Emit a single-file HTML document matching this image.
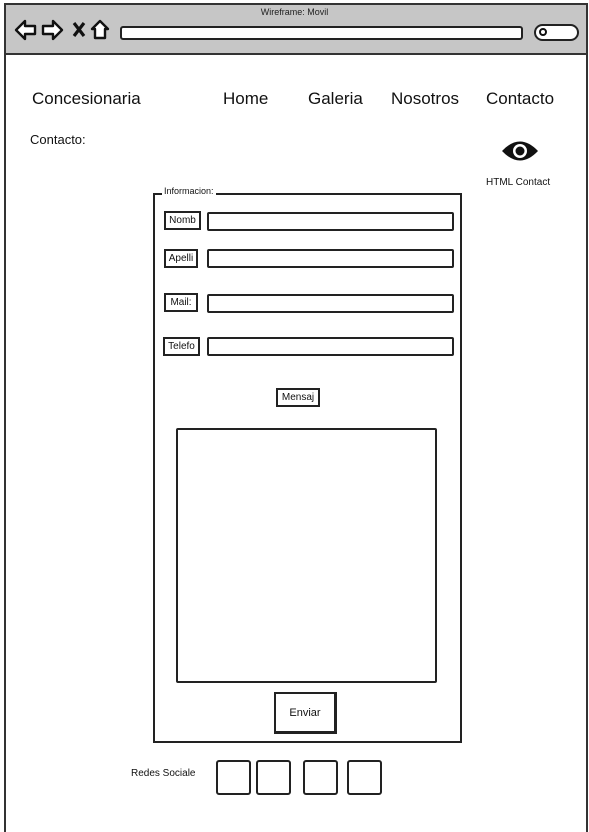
<!DOCTYPE html>
<html style="overflow:hidden;height:832px"><head><style>
*{margin:0;padding:0;box-sizing:border-box}
body{width:589px;height:832px;background:#fff;position:relative;overflow:hidden;font-family:"Liberation Sans",sans-serif;color:#111}
.a{position:absolute}
.b{position:absolute;border:2px solid #222;border-radius:2px;background:#fff}
.lab{position:absolute;border:2px solid #222;font-size:10px;display:flex;align-items:center;justify-content:center;background:#fff}
.nav{position:absolute;top:89px;font-size:17px}
</style></head><body>
<div class="a" style="left:4px;top:3px;width:584px;height:829px;border:2px solid #333;border-bottom:none"></div>
<div class="a" style="left:6px;top:5px;width:580px;height:50px;background:#c6c6c6;border-bottom:2px solid #333"></div>
<div class="a" style="left:0;top:7px;width:589px;text-align:center;font-size:9px;color:#222">Wireframe: Movil</div>
<svg class="a" style="left:14px;top:18px" width="100" height="24" viewBox="0 0 100 24">
<path d="M2 12 L11 3 L11 8 L21 8 L21 16 L11 16 L11 21 Z" fill="#fff" stroke="#111" stroke-width="2.4" stroke-linejoin="round"/>
<path d="M48 12 L39 3 L39 8 L29 8 L29 16 L39 16 L39 21 Z" fill="#fff" stroke="#111" stroke-width="2.4" stroke-linejoin="round"/>
<path d="M60 5 L70 18 M70 5 L60 18" stroke="#111" stroke-width="3.2"/>
<path d="M86 3 L78 11 L81 11 L81 20 L91 20 L91 11 L94 11 Z" fill="#fff" stroke="#111" stroke-width="2.4" stroke-linejoin="round"/>
</svg>
<div class="b" style="left:120px;top:26px;width:403px;height:14px;border-radius:3px"></div>
<div class="b" style="left:534px;top:24px;width:45px;height:17px;border-radius:9px"></div>
<div class="a" style="left:539px;top:28px;width:8px;height:8px;border:2px solid #111;border-radius:50%"></div>
<div class="nav" style="left:32px">Concesionaria</div>
<div class="nav" style="left:223px">Home</div>
<div class="nav" style="left:308px">Galeria</div>
<div class="nav" style="left:391px">Nosotros</div>
<div class="nav" style="left:486px">Contacto</div>
<div class="a" style="left:30px;top:132px;font-size:13px">Contacto:</div>
<svg class="a" style="left:501px;top:138px" width="38" height="26" viewBox="0 0 38 26"><path d="M1 13 Q19 -6 37 13 Q19 32 1 13 Z" fill="#111"/><circle cx="19" cy="13" r="7" fill="#fff"/><circle cx="19" cy="13" r="4.5" fill="#111"/></svg>
<div class="a" style="left:486px;top:177px;font-size:10px">HTML Contact</div>
<div class="a" style="left:153px;top:193px;width:309px;height:550px;border:2px solid #222"></div>
<div class="a" style="left:162px;top:186px;font-size:9px;background:#fff;padding:0 2px">Informacion:</div>
<div class="lab" style="left:164px;top:211px;width:37px;height:19px">Nomb</div>
<div class="b" style="left:207px;top:212px;width:247px;height:19px"></div>
<div class="lab" style="left:164px;top:249px;width:34px;height:19px">Apelli</div>
<div class="b" style="left:207px;top:249px;width:247px;height:19px"></div>
<div class="lab" style="left:164px;top:293px;width:34px;height:19px">Mail:</div>
<div class="b" style="left:207px;top:294px;width:247px;height:19px"></div>
<div class="lab" style="left:163px;top:337px;width:37px;height:19px">Telefo</div>
<div class="b" style="left:207px;top:337px;width:247px;height:19px"></div>
<div class="lab" style="left:276px;top:388px;width:44px;height:19px">Mensaj</div>
<div class="b" style="left:176px;top:428px;width:261px;height:255px"></div>
<div class="lab" style="left:274px;top:692px;width:63px;height:42px;border-right-width:3px;border-bottom-width:3px;font-size:11px">Enviar</div>
<div class="a" style="left:131px;top:768px;font-size:10px">Redes Sociale</div>
<div class="b" style="left:216px;top:760px;width:35px;height:35px;border-radius:3px"></div>
<div class="b" style="left:256px;top:760px;width:35px;height:35px;border-radius:3px"></div>
<div class="b" style="left:303px;top:760px;width:35px;height:35px;border-radius:3px"></div>
<div class="b" style="left:347px;top:760px;width:35px;height:35px;border-radius:3px"></div>
</body></html>
